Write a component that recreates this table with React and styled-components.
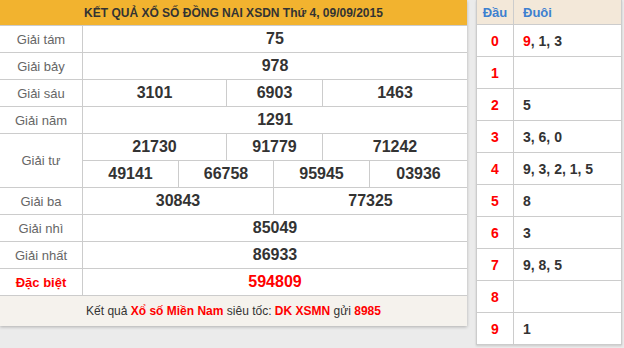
import React from "react";
import styled, { createGlobalStyle } from "styled-components";

const GlobalStyle = createGlobalStyle`
    body {
        margin: 0;
        background: #ebebeb;
        font-family: "Liberation Sans", Arial, sans-serif;
    }
`;

const Page = styled.div`
    display: flex;
    align-items: flex-start;
    gap: 9px;
    width: 624px;
    height: 348px;
`;

const ResultPanel = styled.div`
    width: 467px;
    background: #fff;
    box-shadow: 0 1px 3px rgba(0, 0, 0, 0.25);
`;

const PanelTitle = styled.div`
    height: 25px;
    display: flex;
    align-items: center;
    justify-content: center;
    background: #f2b32f;
    color: #333;
    font-size: 12px;
    font-weight: bold;
`;

const PrizeGrid = styled.div`
    display: grid;
    grid-template-columns: 82px 95px 47px 46px 48px 46px 1fr;
    grid-auto-rows: 26px;
    gap: 1px;
    padding: 1px 0;
    background: #cccccc;
`;

const PrizeName = styled.div`
    grid-row: span ${(p) => p.$rows || 1};
    display: flex;
    align-items: center;
    justify-content: center;
    background: #fff;
    font-size: 13px;
    color: ${(p) => (p.$special ? "#ff0000" : "#666")};
    font-weight: ${(p) => (p.$special ? "bold" : "normal")};
`;

const PrizeNumber = styled.div`
    grid-column: span ${(p) => p.$span};
    display: flex;
    align-items: center;
    justify-content: center;
    background: #fff;
    font-size: 16px;
    font-weight: bold;
    color: ${(p) => (p.$special ? "#ff0000" : "#333")};
`;

const Footer = styled.div`
    height: 30px;
    display: flex;
    align-items: center;
    justify-content: center;
    background: #f5f2ed;
    color: #333;
    font-size: 12px;
    white-space: pre;
`;

const Hot = styled.b`
    color: #ff0000;
`;

const LotoPanel = styled.div`
    width: 144px;
    display: grid;
    grid-template-columns: 36px 1fr;
    grid-template-rows: 24px;
    grid-auto-rows: 31px;
    gap: 1px;
    background: #cccccc;
    border: 1px solid #cccccc;
    border-top: none;
    box-shadow: 0 1px 2px rgba(0, 0, 0, 0.15);
`;

const LotoHead = styled.div`
    display: flex;
    align-items: center;
    justify-content: ${(p) => (p.$left ? "flex-start" : "center")};
    padding-left: ${(p) => (p.$left ? "9px" : "0")};
    background: #f3e8d9;
    color: #3d80d0;
    font-size: 13px;
    font-weight: bold;
`;

const HeadDigit = styled.div`
    display: flex;
    align-items: center;
    justify-content: center;
    background: #fff;
    color: #ff0000;
    font-size: 14px;
    font-weight: bold;
`;

const TailDigits = styled.div`
    display: flex;
    align-items: center;
    padding-left: 9px;
    background: #fff;
    color: #333;
    font-size: 14px;
    font-weight: bold;
    white-space: pre;
`;

const Red = styled.span`
    color: #ff0000;
`;

const prizes = [
    { name: "Giải tám", rows: [[{ n: "75", s: 6 }]] },
    { name: "Giải bảy", rows: [[{ n: "978", s: 6 }]] },
    { name: "Giải sáu", rows: [[{ n: "3101", s: 2 }, { n: "6903", s: 2 }, { n: "1463", s: 2 }]] },
    { name: "Giải năm", rows: [[{ n: "1291", s: 6 }]] },
    {
        name: "Giải tư",
        rows: [
            [{ n: "21730", s: 2 }, { n: "91779", s: 2 }, { n: "71242", s: 2 }],
            [{ n: "49141", s: 1 }, { n: "66758", s: 2 }, { n: "95945", s: 2 }, { n: "03936", s: 1 }],
        ],
    },
    { name: "Giải ba", rows: [[{ n: "30843", s: 3 }, { n: "77325", s: 3 }]] },
    { name: "Giải nhì", rows: [[{ n: "85049", s: 6 }]] },
    { name: "Giải nhất", rows: [[{ n: "86933", s: 6 }]] },
    { name: "Đặc biệt", special: true, rows: [[{ n: "594809", s: 6 }]] },
];

const loto = [
    [<Red key="r">9</Red>, ", 1, 3"],
    [],
    ["5"],
    ["3, 6, 0"],
    ["9, 3, 2, 1, 5"],
    ["8"],
    ["3"],
    ["9, 8, 5"],
    [],
    ["1"],
];

export default function App() {
    return (
        <Page>
            <GlobalStyle />
            <ResultPanel>
                <PanelTitle>KẾT QUẢ XỔ SỐ ĐỒNG NAI XSDN Thứ 4, 09/09/2015</PanelTitle>
                <PrizeGrid>
                    {prizes.map((p) => (
                        <React.Fragment key={p.name}>
                            <PrizeName $rows={p.rows.length} $special={p.special}>
                                {p.name}
                            </PrizeName>
                            {p.rows.flat().map((c, i) => (
                                <PrizeNumber key={i} $span={c.s} $special={p.special}>
                                    {c.n}
                                </PrizeNumber>
                            ))}
                        </React.Fragment>
                    ))}
                </PrizeGrid>
                <Footer>
                    Kết quả <Hot>Xổ số Miền Nam</Hot> siêu tốc: <Hot>DK XSMN</Hot> gửi <Hot>8985</Hot>
                </Footer>
            </ResultPanel>
            <LotoPanel>
                <LotoHead>Đầu</LotoHead>
                <LotoHead $left>Đuôi</LotoHead>
                {loto.map((tails, i) => (
                    <React.Fragment key={i}>
                        <HeadDigit>{i}</HeadDigit>
                        <TailDigits>{tails}</TailDigits>
                    </React.Fragment>
                ))}
            </LotoPanel>
        </Page>
    );
}
